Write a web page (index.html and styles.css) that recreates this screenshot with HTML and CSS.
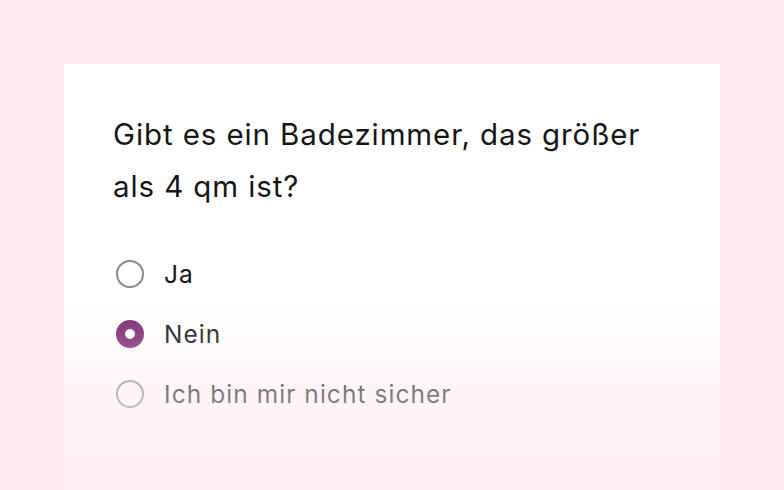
FILE: index.html
```html
<!DOCTYPE html>
<html lang="de">
<head>
<meta charset="utf-8">
<link rel="stylesheet" href="styles.css">
</head>
<body>
<div class="page">
  <div class="card">
    <h1 class="question">Gibt es ein Badezimmer, das größer als 4&nbsp;qm ist?</h1>
    <div class="options">
      <label class="option"><span class="radio"></span><span class="label">Ja</span></label>
      <label class="option"><span class="radio checked"></span><span class="label">Nein</span></label>
      <label class="option"><span class="radio"></span><span class="label">Ich bin mir nicht sicher</span></label>
    </div>
    <div class="fade"></div>
  </div>
</div>
</body>
</html>
```
FILE: styles.css
```css
html, body {
  margin: 0;
  padding: 0;
  height: 100%;
}
body {
  background: #ffe9f2;
  font-family: Inter, "Liberation Sans", sans-serif;
  overflow: hidden;
}
.page {
  padding: 64px 64px 0 64px;
  height: 100%;
  box-sizing: border-box;
}
.card {
  position: relative;
  background: #ffffff;
  height: 100%;
  padding: 44px 49px 0 49px;
  box-sizing: border-box;
}
.question {
  margin: 0;
  font-size: 29.5px;
  line-height: 52px;
  font-weight: 400;
  color: #161616;
  letter-spacing: 0.9px;
}
.options {
  margin-top: 32px;
  display: flex;
  flex-direction: column;
}
.option {
  display: flex;
  align-items: center;
  height: 60px;
  gap: 20px;
  margin-left: 3px;
}
.radio {
  width: 28px;
  height: 28px;
  box-sizing: border-box;
  border: 2.7px solid #8a8a8a;
  border-radius: 50%;
  flex: none;
}
.radio.checked {
  border: 9px solid #7c2a72;
  background: #ffffff;
}
.label {
  font-size: 24.5px;
  font-weight: 400;
  color: #161616;
  letter-spacing: 1.05px;
}
.fade {
  position: absolute;
  left: 0;
  right: 0;
  top: 200px;
  bottom: 0;
  background: linear-gradient(to bottom, rgba(255,233,242,0) 0%, rgba(255,233,242,0) 14%, rgba(255,233,242,0.14) 31%, rgba(255,233,242,0.47) 58%, rgba(255,233,242,0.75) 100%);
  pointer-events: none;
}
```
